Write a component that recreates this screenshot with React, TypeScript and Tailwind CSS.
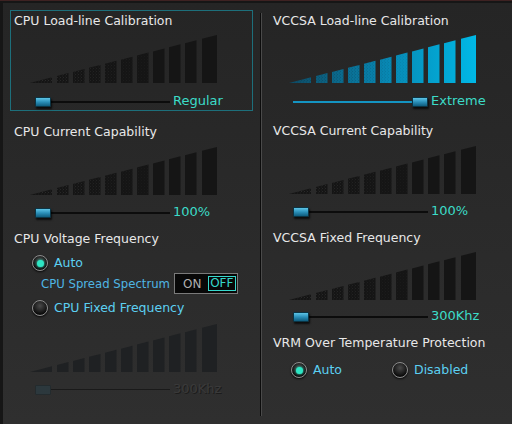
import React, { useId } from "react";

type Variant = "dark" | "cyan" | "dim";

const S = 48 / 187;
const SHAPES: [number, number][] = [
  [0, 22],
  [27, 38.5],
  [43, 54.5],
  [59, 70.5],
  [75, 86.5],
  [91, 102.5],
  [107, 118.5],
  [123, 134.5],
  [139, 150.5],
  [155, 166.5],
  [172, 187],
];

function Bars({ variant }: { variant: Variant }) {
  const id = useId().replace(/:/g, "");
  const fill =
    variant === "cyan" ? `url(#g${id})` : variant === "dim" ? "#1f2123" : "#151515";
  return (
    <svg width="188" height="48" viewBox="0 0 188 48" className="block">
      <defs>
        <linearGradient id={`g${id}`} x1="0" y1="0" x2="187" y2="0" gradientUnits="userSpaceOnUse">
          <stop offset="0" stopColor="#0e4a63" />
          <stop offset="0.5" stopColor="#0885b0" />
          <stop offset="1" stopColor="#00b8e6" />
        </linearGradient>
        <pattern id={`p${id}`} width="3" height="3" patternUnits="userSpaceOnUse">
          <rect x="0" y="0" width="1" height="1" fill={variant === "cyan" ? "#0a3a50" : "#2a2a2a"} />
          <rect x="2" y="1.5" width="1" height="1" fill={variant === "cyan" ? "#0a3a50" : "#222"} />
        </pattern>
      </defs>
      {SHAPES.map(([a, b], i) => {
        const pts =
          i === 0
            ? `${a},48 ${b},48 ${b},${48 - S * b}`
            : `${a},48 ${b},48 ${b},${48 - S * b} ${a},${48 - S * a}`;
        return (
          <g key={i}>
            <polygon points={pts} fill={fill} />
            {variant !== "dim" && i < 7 && (
              <polygon
                points={pts}
                fill={`url(#p${id})`}
                opacity={(variant === "cyan" ? 0.45 : 1) * (1 - i * 0.13)}
              />
            )}
          </g>
        );
      })}
    </svg>
  );
}

function Thumb({ dim }: { dim?: boolean }) {
  return (
    <div
      className={
        dim
          ? "absolute top-px h-[10px] w-[16px] rounded-[1px] border border-[#1d2a2e] bg-[#2b4048] opacity-60"
          : "absolute top-px h-[10px] w-[16px] rounded-[1px] border border-[#0b3444] bg-gradient-to-b from-[#5cc4e6] via-[#2a8fb8] to-[#0f5d7e] shadow-[1px_2px_2px_rgba(0,0,0,0.7)]"
      }
    />
  );
}

function Slider({
  value,
  max,
  dim,
}: {
  value: string;
  max?: boolean;
  dim?: boolean;
}) {
  return (
    <div className="flex h-[12px] items-center">
      <div className="relative h-[12px] w-[135px]">
        {max ? (
          <>
            <div className="absolute left-0 top-[5px] h-[2px] w-[119px] bg-[#1494c2]" />
            <div className="absolute left-[119px]">
              <Thumb />
            </div>
          </>
        ) : (
          <>
            <div
              className={
                dim
                  ? "absolute left-[16px] right-0 top-[5px] h-[1px] bg-[#1a1a1a]"
                  : "absolute left-[16px] right-0 top-[5px] h-[2px] bg-[#0c0c0c]"
              }
            />
            <div className="absolute left-0">
              <Thumb dim={dim} />
            </div>
          </>
        )}
      </div>
      <span
        className={
          dim
            ? "ml-[3px] mt-[-3px] text-[13px] leading-[16px] text-[#3a3a3a] [text-shadow:1px_1px_0_#1c1c1c]"
            : "ml-[3px] mt-[-3px] text-[13px] leading-[16px] text-[#3cdcc8]"
        }
      >
        {value}
      </span>
    </div>
  );
}

function Radio({ checked, label, className }: { checked?: boolean; label: string; className?: string }) {
  return (
    <div className={"flex h-[16px] items-center " + (className ?? "")}>
      <div className="flex h-[16px] w-[16px] items-center justify-center rounded-full border-[1.5px] border-[#8c8c8c] bg-[radial-gradient(circle_at_50%_35%,#4a4a4a,#0c0c0c_70%)] shadow-[0_1px_2px_rgba(0,0,0,0.8)]">
        {checked && (
          <div className="h-[7px] w-[7px] rounded-full bg-[#2ee6c4] shadow-[0_0_3px_#2ee6c4]" />
        )}
      </div>
      <span className="ml-[6px] text-[12.5px] leading-[16px] text-[#5cd0f2]">{label}</span>
    </div>
  );
}

function Title({ children, className }: { children: React.ReactNode; className?: string }) {
  return (
    <div className={"h-[16px] text-[12.5px] leading-[16px] text-[#e8e8e8] " + (className ?? "")}>
      {children}
    </div>
  );
}

export default function App() {
  return (
    <div
      className="h-[424px] w-[512px] overflow-hidden bg-[#161616]"
      style={{ fontFamily: '"DejaVu Sans", Verdana, sans-serif' }}
    >
      <div className="h-px w-full bg-[#3e2222]" />
      <div className="ml-[3px] mt-[2px] flex h-[421px] bg-gradient-to-b from-[#252525] to-[#2f2f2f]">
        {/* Left column */}
        <div className="flex w-[256px] flex-col pl-[7px] pt-[7px]">
          <div className="box-border flex h-[101px] w-[243px] flex-col border border-[#1d6f7b] pl-[3px]">
            <Title className="mt-[2px]">CPU Load-line Calibration</Title>
            <div className="ml-[16px] mt-[6px]">
              <Bars variant="dark" />
            </div>
            <div className="ml-[21px] mt-[13px]">
              <Slider value="Regular" />
            </div>
          </div>
          <Title className="ml-[4px] mt-[13px]">CPU Current Capability</Title>
          <div className="ml-[20px] mt-[7px]">
            <Bars variant="dark" />
          </div>
          <div className="ml-[25px] mt-[12px]">
            <Slider value="100%" />
          </div>
          <Title className="ml-[4px] mt-[12px]">CPU Voltage Frequency</Title>
          <Radio checked label="Auto" className="ml-[22px] mt-[8px]" />
          <div className="ml-[31px] mt-[2px] flex h-[21px] items-center">
            <span className="w-[133px] text-[11.7px] leading-[16px] text-[#4fb6e4]">CPU Spread Spectrum</span>
            <div className="flex h-[21px] w-[64px] items-center border border-[#7a7a7a] bg-[#080808] pl-[8px] pr-[1px]">
              <span className="w-[25px] text-[12px] leading-[14px] text-[#b0b0b0]">ON</span>
              <span className="flex h-[15px] w-[29px] items-center justify-center border border-[#36d8cc] text-[12px] leading-[13px] text-[#36d8cc]">
                OFF
              </span>
            </div>
          </div>
          <Radio label="CPU Fixed Frequency" className="ml-[22px] mt-[6px]" />
          <div className="ml-[20px] mt-[8px]">
            <Bars variant="dim" />
          </div>
          <div className="ml-[25px] mt-[12px]">
            <Slider value="300Khz" dim />
          </div>
        </div>
        {/* Divider */}
        <div className="ml-[1px] mt-[10px] flex h-[403px] w-[2px]">
          <div className="w-px bg-[#0c0c0c]" />
          <div className="w-px bg-[#4a4a4a]" />
        </div>
        {/* Right column */}
        <div className="flex flex-col pl-[11px]">
          <Title className="mt-[10px]">VCCSA Load-line Calibration</Title>
          <div className="ml-[16px] mt-[6px]">
            <Bars variant="cyan" />
          </div>
          <div className="ml-[20px] mt-[13px]">
            <Slider value="Extreme" max />
          </div>
          <Title className="mt-[15px]">VCCSA Current Capability</Title>
          <div className="ml-[16px] mt-[7px]">
            <Bars variant="dark" />
          </div>
          <div className="ml-[20px] mt-[12px]">
            <Slider value="100%" />
          </div>
          <Title className="mt-[12px]">VCCSA Fixed Frequency</Title>
          <div className="ml-[16px] mt-[6px]">
            <Bars variant="dark" />
          </div>
          <div className="ml-[20px] mt-[11px]">
            <Slider value="300Khz" />
          </div>
          <Title className="mt-[12px]">VRM Over Temperature Protection</Title>
          <div className="mt-[11px] flex">
            <Radio checked label="Auto" className="ml-[18px] w-[101px]" />
            <Radio label="Disabled" />
          </div>
        </div>
      </div>
    </div>
  );
}
